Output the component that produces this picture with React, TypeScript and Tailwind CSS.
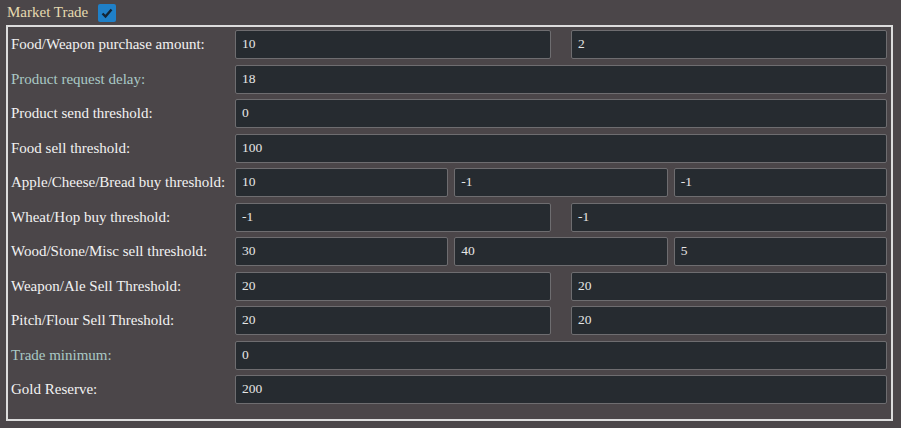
import React from 'react';

type Row = { label: string; values: string[]; accent?: boolean };

const rows: Row[] = [
  { label: 'Food/Weapon purchase amount:', values: ['10', '2'] },
  { label: 'Product request delay:', values: ['18'], accent: true },
  { label: 'Product send threshold:', values: ['0'] },
  { label: 'Food sell threshold:', values: ['100'] },
  { label: 'Apple/Cheese/Bread buy threshold:', values: ['10', '-1', '-1'] },
  { label: 'Wheat/Hop buy threshold:', values: ['-1', '-1'] },
  { label: 'Wood/Stone/Misc sell threshold:', values: ['30', '40', '5'] },
  { label: 'Weapon/Ale Sell Threshold:', values: ['20', '20'] },
  { label: 'Pitch/Flour Sell Threshold:', values: ['20', '20'] },
  { label: 'Trade minimum:', values: ['0'], accent: true },
  { label: 'Gold Reserve:', values: ['200'] },
];

function Field({ value }: { value: string }) {
  return (
    <div className="h-[29px] flex items-center px-[6px] bg-[#262b30] border border-[#6e6d70] rounded-[2px] text-[13.5px] text-[#e6e6e6]">
      {value}
    </div>
  );
}

export default function App() {
  return (
    <div className="w-[901px] h-[428px] bg-[#4b4649] px-[6px] pt-[3px] font-['Liberation_Serif','DejaVu_Serif',serif]">
      <div className="flex items-center h-[19px]">
        <span className="text-[15px] text-[#e6dab0] ml-[1px]">Market Trade</span>
        <div className="ml-[10px] w-[18px] h-[18px] rounded-[2px] bg-[#1f80c8] flex items-center justify-center">
          <svg width="14" height="14" viewBox="0 0 14 14">
            <path d="M2.5 7.5 L5.5 10.5 L11.5 3.5" fill="none" stroke="#142536" strokeWidth="2.4" />
          </svg>
        </div>
      </div>

      <div className="mt-[3px] w-[887px] h-[396px] border-2 border-[#dcdcdc] pl-[3px] pr-[4px] pt-[3px] flex flex-col gap-[5.5px]">
        {rows.map((row) => (
          <div key={row.label} className="flex items-center">
            <div
              className={`w-[224px] shrink-0 text-[15px] ${row.accent ? 'text-[#a9c9c5]' : 'text-[#f2f2f2]'}`}
            >
              {row.label}
            </div>
            {row.values.length === 1 && (
              <div className="flex-1">
                <Field value={row.values[0]} />
              </div>
            )}
            {row.values.length === 2 && (
              <div className="flex-1 grid grid-cols-2 gap-[20px]">
                {row.values.map((v, i) => (
                  <Field key={i} value={v} />
                ))}
              </div>
            )}
            {row.values.length === 3 && (
              <div className="flex-1 grid grid-cols-3 gap-[6px]">
                {row.values.map((v, i) => (
                  <Field key={i} value={v} />
                ))}
              </div>
            )}
          </div>
        ))}
      </div>
    </div>
  );
}
